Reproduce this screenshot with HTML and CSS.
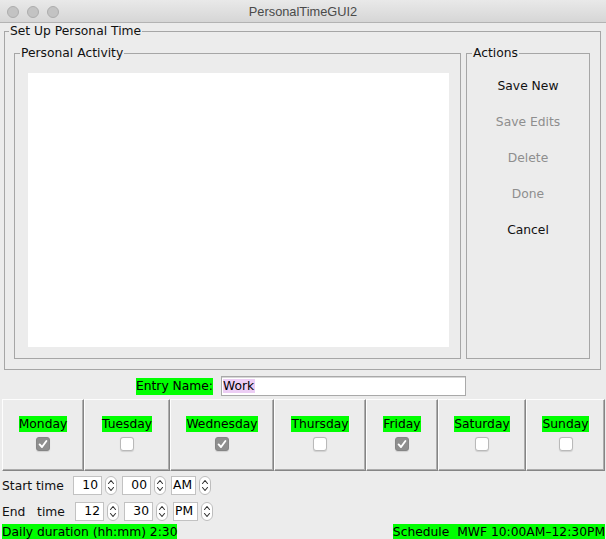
FILE: index.html
```html
<!DOCTYPE html>
<html lang="en">
<head>
<meta charset="utf-8">
<title>PersonalTimeGUI2</title>
<link rel="stylesheet" href="styles.css">
</head>
<body>
<div class="window">
  <div class="titlebar">
    <div class="lights"><span class="light"></span><span class="light"></span><span class="light"></span></div>
    <div class="title">PersonalTimeGUI2</div>
    <div></div>
  </div>

  <fieldset class="group outer">
    <legend class="legend outer-legend">Set Up Personal Time</legend>
    <div class="outer-body">
      <fieldset class="group activity">
        <legend class="legend inner-legend">Personal Activity</legend>
        <div class="activity-body"><div class="list"></div></div>
      </fieldset>
      <fieldset class="group actions">
        <legend class="legend inner-legend">Actions</legend>
        <div class="actions-body">
          <button class="action">Save New</button>
          <button class="action" disabled>Save Edits</button>
          <button class="action" disabled>Delete</button>
          <button class="action" disabled>Done</button>
          <button class="action">Cancel</button>
        </div>
      </fieldset>
    </div>
  </fieldset>

  <div class="entry-row">
    <span class="hl">Entry Name:</span>
    <div class="textfield"><span class="sel">Work</span></div>
  </div>

  <div class="days">
    <div class="day"><span class="hl">Monday</span><span class="check on"><svg viewBox="0 0 14 14" width="14" height="14"><path d="M3.6 7.4 L6 10 L10.4 4" fill="none" stroke="#fff" stroke-width="1.9" stroke-linecap="round" stroke-linejoin="round"/></svg></span></div>
    <div class="day"><span class="hl">Tuesday</span><span class="check"></span></div>
    <div class="day"><span class="hl">Wednesday</span><span class="check on"><svg viewBox="0 0 14 14" width="14" height="14"><path d="M3.6 7.4 L6 10 L10.4 4" fill="none" stroke="#fff" stroke-width="1.9" stroke-linecap="round" stroke-linejoin="round"/></svg></span></div>
    <div class="day"><span class="hl">Thursday</span><span class="check"></span></div>
    <div class="day"><span class="hl">Friday</span><span class="check on"><svg viewBox="0 0 14 14" width="14" height="14"><path d="M3.6 7.4 L6 10 L10.4 4" fill="none" stroke="#fff" stroke-width="1.9" stroke-linecap="round" stroke-linejoin="round"/></svg></span></div>
    <div class="day"><span class="hl">Saturday</span><span class="check"></span></div>
    <div class="day"><span class="hl">Sunday</span><span class="check"></span></div>
  </div>

  <div class="time-row first">
    <span class="time-label start">Start time</span>
    <span class="field num">10</span>
    <svg class="spin" viewBox="0 0 12 19" width="12" height="19"><rect x="0.5" y="0.5" width="11" height="18" rx="5.5" fill="#fff" stroke="#bdbdbd"/><path d="M3.5 7.5 L6 4.5 L8.5 7.5 M3.5 11.5 L6 14.5 L8.5 11.5" fill="none" stroke="#333" stroke-width="1.1" stroke-linecap="round" stroke-linejoin="round"/></svg>
    <span class="field num">00</span>
    <svg class="spin" viewBox="0 0 12 19" width="12" height="19"><rect x="0.5" y="0.5" width="11" height="18" rx="5.5" fill="#fff" stroke="#bdbdbd"/><path d="M3.5 7.5 L6 4.5 L8.5 7.5 M3.5 11.5 L6 14.5 L8.5 11.5" fill="none" stroke="#333" stroke-width="1.1" stroke-linecap="round" stroke-linejoin="round"/></svg>
    <span class="field ampm">AM</span>
    <svg class="spin" viewBox="0 0 12 19" width="12" height="19"><rect x="0.5" y="0.5" width="11" height="18" rx="5.5" fill="#fff" stroke="#bdbdbd"/><path d="M3.5 7.5 L6 4.5 L8.5 7.5 M3.5 11.5 L6 14.5 L8.5 11.5" fill="none" stroke="#333" stroke-width="1.1" stroke-linecap="round" stroke-linejoin="round"/></svg>
  </div>
  <div class="time-row second">
    <span class="time-label end">End&nbsp;&nbsp;&nbsp;time</span>
    <span class="field num">12</span>
    <svg class="spin" viewBox="0 0 12 19" width="12" height="19"><rect x="0.5" y="0.5" width="11" height="18" rx="5.5" fill="#fff" stroke="#bdbdbd"/><path d="M3.5 7.5 L6 4.5 L8.5 7.5 M3.5 11.5 L6 14.5 L8.5 11.5" fill="none" stroke="#333" stroke-width="1.1" stroke-linecap="round" stroke-linejoin="round"/></svg>
    <span class="field num">30</span>
    <svg class="spin" viewBox="0 0 12 19" width="12" height="19"><rect x="0.5" y="0.5" width="11" height="18" rx="5.5" fill="#fff" stroke="#bdbdbd"/><path d="M3.5 7.5 L6 4.5 L8.5 7.5 M3.5 11.5 L6 14.5 L8.5 11.5" fill="none" stroke="#333" stroke-width="1.1" stroke-linecap="round" stroke-linejoin="round"/></svg>
    <span class="field ampm">PM</span>
    <svg class="spin" viewBox="0 0 12 19" width="12" height="19"><rect x="0.5" y="0.5" width="11" height="18" rx="5.5" fill="#fff" stroke="#bdbdbd"/><path d="M3.5 7.5 L6 4.5 L8.5 7.5 M3.5 11.5 L6 14.5 L8.5 11.5" fill="none" stroke="#333" stroke-width="1.1" stroke-linecap="round" stroke-linejoin="round"/></svg>
  </div>

  <div class="status">
    <span class="hl">Daily duration (hh:mm) 2:30</span>
    <span class="hl pre">Schedule  MWF 10:00AM–12:30PM</span>
  </div>
</div>
</body>
</html>
```

FILE: styles.css
```css
* { box-sizing: border-box; }

html, body {
  margin: 0;
  padding: 0;
  background: #ececec;
}

body {
  width: 606px;
  height: 539px;
  overflow: hidden;
  font-family: "DejaVu Sans", "Noto Sans", sans-serif;
  font-size: 12.3px;
  color: #111;
}

.window {
  width: 606px;
  height: 539px;
  display: flex;
  flex-direction: column;
}

/* title bar */
.titlebar {
  height: 23px;
  flex: none;
  display: grid;
  grid-template-columns: 1fr auto 1fr;
  align-items: center;
  background: linear-gradient(#e9e9e9, #d6d6d6);
  border-bottom: 1px solid #b3b3b3;
}

.lights {
  display: flex;
  gap: 8px;
  padding-left: 7px;
  padding-top: 2px;
}

.light {
  width: 12px;
  height: 12px;
  border-radius: 50%;
  background: #c3c3c3;
  border: 1px solid #adadad;
}

.title {
  font-family: "Liberation Sans", Arial, sans-serif;
  font-size: 12.8px;
  color: #4a4a4a;
  padding-top: 1px;
}

/* titled borders */
.group {
  margin: 0;
  padding: 0;
  min-inline-size: 0;
  border: 1px solid #a6a6a6;
}

.legend {
  padding: 0 1px;
  line-height: 16px;
  color: #111;
}

.outer {
  margin: 0 5px 0 4px;
}

.outer-legend { margin-left: 4px; }
.inner-legend { margin-left: 5px; }

.outer-body {
  display: flex;
  gap: 5px;
  padding: 6px 10px 10px 9px;
}

.activity {
  width: 447px;
  flex: none;
}

.activity-body {
  padding: 12px 11px 11px 13px;
}

.list {
  height: 274px;
  background: #fff;
}

.actions {
  flex: 1;
}

.actions-body {
  display: flex;
  flex-direction: column;
  padding-top: 7px;
}

.action {
  height: 36px;
  border: none;
  background: none;
  font: inherit;
  color: #111;
  padding: 0;
  text-align: center;
}

.action:disabled {
  color: #8e8e8e;
}

/* highlighted labels */
.hl {
  background: #00ff00;
  color: #000;
  line-height: 16px;
  white-space: nowrap;
}

.pre { white-space: pre; }

/* entry row */
.entry-row {
  display: flex;
  justify-content: center;
  align-items: center;
  gap: 8px;
  padding: 6px 4px 3px 0;
  flex: none;
}

.entry-row .hl { line-height: 17px; }

.textfield {
  width: 245px;
  height: 20px;
  background: #fff;
  border: 1px solid #a9a9a9;
  box-shadow: inset 0 1px 0 #d6d6d6;
  padding: 1px 0 0 1px;
  line-height: 17px;
  color: #000;
}

.sel {
  background: #eccdf4;
  padding-right: 1px;
}

/* days */
.days {
  display: grid;
  grid-template-columns: 82px 86px 104px 92px 72px 88px 1fr;
  height: 72px;
  margin: 0 1px 0 2px;
  flex: none;
}

.day {
  display: flex;
  flex-direction: column;
  align-items: center;
  padding-top: 16px;
  border-top: 1px solid #fdfdfd;
  border-left: 1px solid #fdfdfd;
  border-right: 1px solid #858585;
  border-bottom: 1px solid #858585;
  box-shadow: inset -1px -1px 0 #adadad;
}

.check {
  margin-top: 5px;
  width: 14px;
  height: 14px;
  border-radius: 3px;
  background: #fff;
  border: 1px solid #b9b9b9;
  box-shadow: 0 0.5px 1px rgba(0,0,0,0.12);
  display: flex;
}

.check.on {
  background: #8e8e8e;
  border-color: #858585;
}

.check svg {
  margin: -1px;
}

/* time rows */
.time-row {
  display: flex;
  align-items: center;
  height: 19px;
  margin-left: 2px;
  flex: none;
}

.time-row.first { margin-top: 5px; }
.time-row.second { margin-top: 7px; }

.time-label {
  white-space: nowrap;
}

.time-label.start { width: 71px; }
.time-label.end { width: 73px; }

.field {
  height: 19px;
  background: #fff;
  border: 1px solid #c2c2c2;
  line-height: 17px;
  color: #000;
}

.field.num {
  width: 29px;
  text-align: right;
  padding-right: 3px;
}

.field.ampm {
  width: 25px;
  padding-left: 1px;
}

.spin {
  flex: none;
  display: block;
  margin: 0 5px 0 3px;
}

/* status */
.status {
  display: flex;
  justify-content: space-between;
  margin: 3px 1px 0 2px;
  flex: none;
}
```
